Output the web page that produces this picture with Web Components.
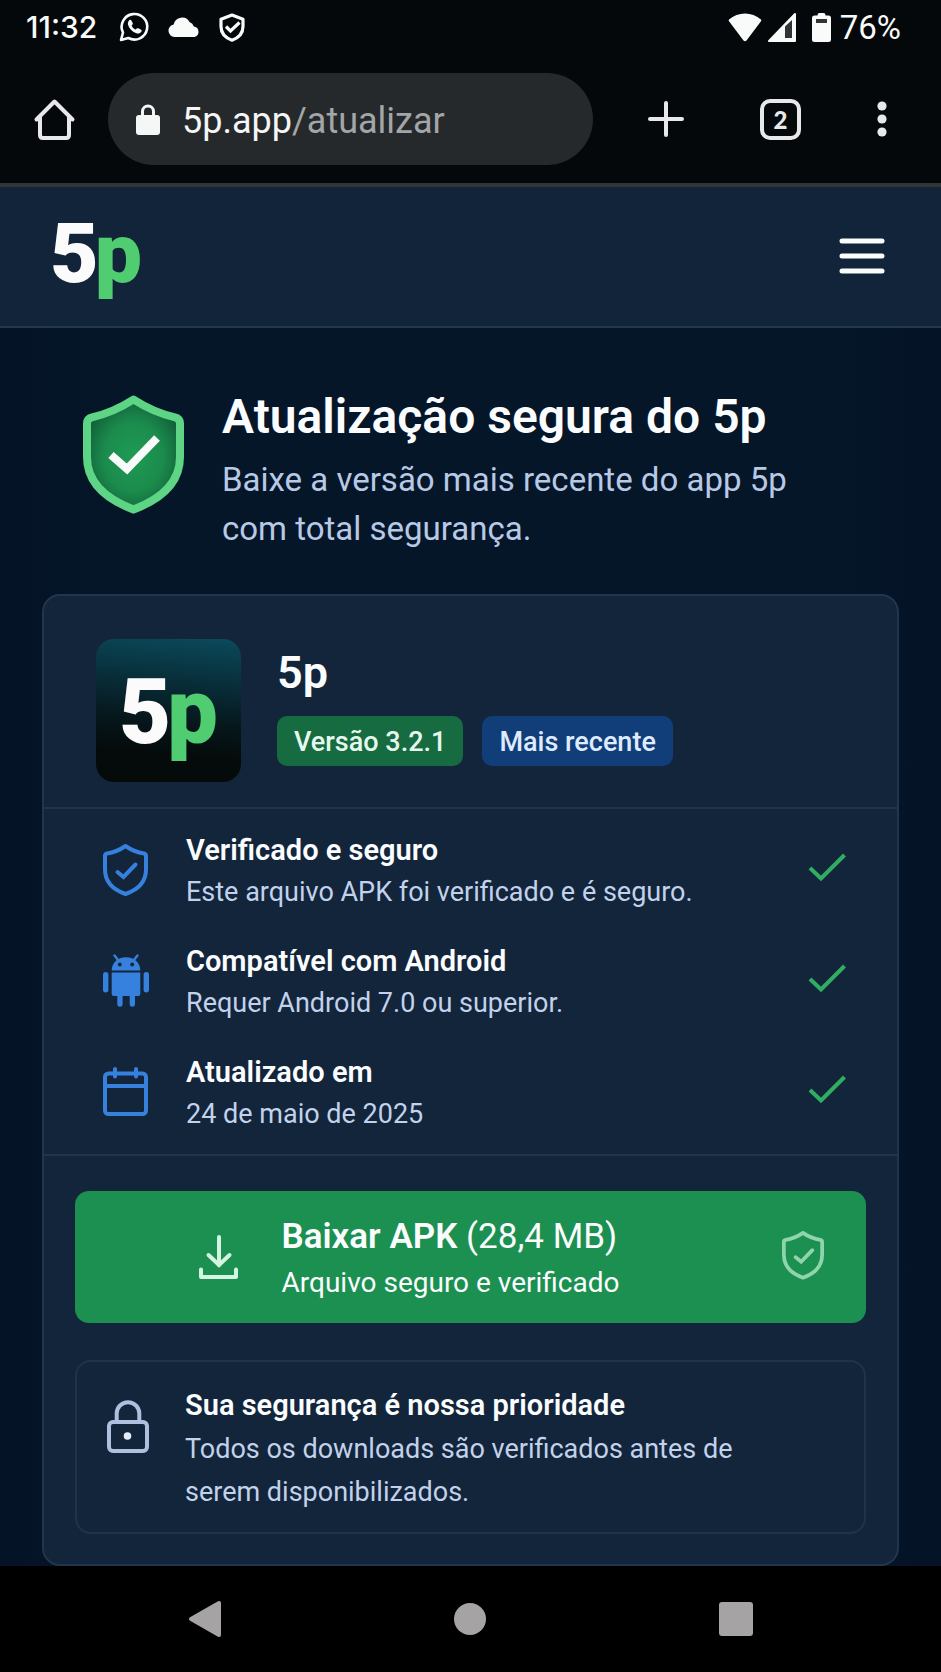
<!DOCTYPE html>
<html lang="pt-BR">
<head>
  <meta charset="UTF-8">
  <meta name="viewport" content="width=device-width, initial-scale=1">
  <title>Atualização segura do 5p</title>
  <style>
    * { box-sizing: border-box; }
    body {
      margin: 0;
      min-height: 100vh;
      display: flex;
      flex-direction: column;
      background: #051528;
      color: #fbfcfe;
      font-family: Roboto, "Liberation Sans", sans-serif;
    }
    main {
      flex: 1;
      background: linear-gradient(90deg, #041325 0%, #051629 12%, #051629 88%, #041325 100%);
    }
  </style>
</head>
<body>
  <status-bar hora="11:32" bateria="76%"></status-bar>
  <browser-bar dominio="5p.app" caminho="/atualizar" abas="2"></browser-bar>
  <site-header></site-header>

  <main>
    <page-hero>
      <span slot="titulo">Atualização segura do 5p</span>
      Baixe a versão mais recente do app 5p com total segurança.
    </page-hero>

    <app-card nome="5p">
      <app-badge slot="badges">Versão 3.2.1</app-badge>
      <app-badge slot="badges" tipo="azul">Mais recente</app-badge>

      <feature-item slot="itens" icone="escudo" titulo="Verificado e seguro">Este arquivo APK foi verificado e é seguro.</feature-item>
      <feature-item slot="itens" icone="android" titulo="Compatível com Android">Requer Android 7.0 ou superior.</feature-item>
      <feature-item slot="itens" icone="calendario" titulo="Atualizado em">24 de maio de 2025</feature-item>

      <download-button titulo="Baixar APK" tamanho="(28,4 MB)">Arquivo seguro e verificado</download-button>
      <security-note titulo="Sua segurança é nossa prioridade">Todos os downloads são verificados antes de serem disponibilizados.</security-note>
    </app-card>
  </main>

  <nav-bar></nav-bar>

  <script>
    // [largura, altura, conteúdo]
    const ICONES = {
      whatsapp: [30, 30, `
        <path d="M2 28l2-7.500A12.800 12.800 0 1 1 9.300 26z" fill="none" stroke="currentColor" stroke-width="2.600" stroke-linejoin="round"/>
        <path d="M10.200 8.200c.6-.6 1.600-.6 2 .1l1.500 2.600c.3.600.2 1.200-.2 1.700l-.9 1.100c.9 1.800 2.200 3.100 4 3.900l1.200-1.100c.4-.4 1.100-.5 1.600-.2l2.700 1.500c.7.4.8 1.300.2 2-1.200 1.600-3 2.200-4.900 1.500-4-1.300-7.100-4.300-8.300-8.200-.5-1.900-.1-3.700 1.100-4.900z" fill="currentColor"/>`],
      nuvem: [32, 20, `
        <path d="M6.500 20a6.300 6.300 0 0 1-.8-12.500A8.500 8.500 0 0 1 21.500 5a6.500 6.500 0 0 1 4.300 4.600A5.300 5.300 0 0 1 26.500 20z" fill="currentColor"/>`],
      protecao: [26, 29, `
        <path d="M13 2L2 6.200V13.500c0 6.500 4.300 11.300 11 13.700 6.700-2.400 11-7.200 11-13.700V6.200z" fill="none" stroke="currentColor" stroke-width="3.200" stroke-linejoin="round"/>
        <path d="M7 13.500l4.500 4.500 9-8.500" fill="none" stroke="currentColor" stroke-width="3.200"/>`],
      wifi: [34, 29, `<path d="M1 6.500C10-1.500 24-1.500 33 6.500q.8.800 0 1.700L18.500 27.500q-1.500 1.500-3 0L1 8.200q-.8-.9 0-1.700z" fill="currentColor"/>`],
      sinal: [28, 29, `
        <path d="M27 1v27H1z" fill="currentColor" stroke="currentColor" stroke-width="2" stroke-linejoin="round"/>
        <path d="M17 13.500L24 7v18h-7z" fill="#303437"/>`],
      bateria: [19, 29, `
        <path d="M5.500 2q0-2 2-2h4q2 0 2 2v.5h3q2.500 0 2.500 2.500v21.500q0 2.500-2.500 2.500h-14Q0 29 0 26.500V5q0-2.500 2.500-2.500h3z" fill="currentColor"/>
        <path d="M4 6h11v4H4z" fill="#303437"/>`],
      casa: [41, 41, `
        <path d="M2.500 20.500L20.500 2.500l18 18M6 17.500V36q0 3 3 3h23q3 0 3-3V17.500" fill="none" stroke="currentColor" stroke-width="4" stroke-linecap="round" stroke-linejoin="round"/>`],
      cadeado: [24, 31, `
        <path d="M6.500 13V7.500a5.500 5.500 0 0 1 11 0V13" fill="none" stroke="currentColor" stroke-width="3"/>
        <rect x="0" y="11" width="24" height="20" rx="3" fill="currentColor"/>`],
      mais: [36, 36, `<path d="M18 2v32M2 18h32" stroke="currentColor" stroke-width="4" stroke-linecap="round"/>`],
      pontos: [10, 36, `
        <circle cx="5" cy="5" r="4.600" fill="currentColor"/>
        <circle cx="5" cy="18" r="4.600" fill="currentColor"/>
        <circle cx="5" cy="31" r="4.600" fill="currentColor"/>`],
      menu: [46, 36, `<path d="M3 3h40M3 18h40M3 33h40" stroke="currentColor" stroke-width="5" stroke-linecap="round"/>`],
      escudoGrande: [101, 119, `
        <defs>
          <radialGradient id="verde" cx="50%" cy="52%" r="58%">
            <stop offset="0%" stop-color="#1f9b55"/>
            <stop offset="55%" stop-color="#1b8b4c"/>
            <stop offset="100%" stop-color="#105a37"/>
          </radialGradient>
        </defs>
        <path d="M50.500 4.500C38 12.500 24 19 9 22.300Q4 23.500 4 28.500V62C4 88 24 104.500 50.500 114.500 77 104.500 97 88 97 62V28.500Q97 23.500 92 22.300C77 19 63 12.500 50.500 4.500z" fill="url(#verde)" stroke="#5ed584" stroke-width="8" stroke-linejoin="round"/>
        <path d="M28 60l16 14 30-31" fill="none" stroke="#f8fbf9" stroke-width="8"/>`],
      escudo: [45, 52, `
        <path d="M22.500 2C17 5.800 10.500 8.500 4 9.500Q2 9.800 2 12V25.500C2 37.500 9.500 45.500 22.500 50 35.500 45.500 43 37.500 43 25.500V12Q43 9.800 41 9.500C34.500 8.500 28 5.800 22.500 2z" fill="none" stroke="currentColor" stroke-width="4" stroke-linejoin="round"/>
        <path d="M14.500 28l6 5 12-12.500" fill="none" stroke="currentColor" stroke-width="4" stroke-linecap="round"/>`],
      android: [46, 53, `
        <path d="M11.500 1.500l4 5M34.500 1.500l-4 5" stroke="currentColor" stroke-width="2.400" stroke-linecap="round"/>
        <path d="M8.700 16.500C8.700 9 14.500 3.200 23 3.200S37.300 9 37.300 16.500z" fill="currentColor"/>
        <circle cx="16.800" cy="10.500" r="1.900" fill="#13253b"/>
        <circle cx="29.200" cy="10.500" r="1.900" fill="#13253b"/>
        <path d="M8.700 18.500h28.600V40q0 2-2 2H32v8a2.600 2.600 0 0 1-5.300 0v-8h-7.100v8a2.600 2.600 0 0 1-5.300 0v-8h-3.600q-2 0-2-2z" fill="currentColor"/>
        <rect x="0" y="18" width="5.400" height="20.500" rx="2.700" fill="currentColor"/>
        <rect x="40.600" y="18" width="5.400" height="20.500" rx="2.700" fill="currentColor"/>`],
      calendario: [45, 49, `
        <rect x="2" y="6.500" width="41" height="40.500" rx="3.500" fill="none" stroke="currentColor" stroke-width="4"/>
        <path d="M3 19h39" stroke="currentColor" stroke-width="4"/>
        <path d="M12 2v7.500M33 2v7.500" stroke="currentColor" stroke-width="4" stroke-linecap="round"/>`],
      ok: [38, 29, `<path d="M2 15l11 10.500L36.500 2" fill="none" stroke="currentColor" stroke-width="4"/>`],
      baixar: [39, 43, `
        <path d="M20 1v28" stroke="currentColor" stroke-width="4" stroke-linecap="round"/>
        <path d="M9.500 19L20 29l10.500-10" fill="none" stroke="currentColor" stroke-width="4" stroke-linecap="round"/>
        <path d="M2 33.500V41h35v-7.500" fill="none" stroke="currentColor" stroke-width="4" stroke-linecap="round" stroke-linejoin="round"/>`],
      cadeadoLinha: [42, 53, `
        <path d="M9.700 21V13.500a11.300 11.300 0 0 1 22.600 0V21" fill="none" stroke="currentColor" stroke-width="4"/>
        <rect x="2" y="22" width="38" height="29" rx="4" fill="none" stroke="currentColor" stroke-width="4"/>
        <circle cx="20.500" cy="36" r="3.800" fill="#e4ecfa"/>`],
      voltar: [32, 36, `<path d="M30 2v32L2 18z" fill="currentColor" stroke="currentColor" stroke-width="4" stroke-linejoin="round"/>`],
      inicio: [32, 32, `<circle cx="16" cy="16" r="16" fill="currentColor"/>`],
      recentes: [34, 34, `<rect width="34" height="34" rx="3" fill="currentColor"/>`]
    };

    const BASE = `
      * { box-sizing: border-box; }
      button { margin: 0; padding: 0; border: none; background: none; color: inherit; font: inherit; cursor: pointer; }
    `;

    class UiIcon extends HTMLElement {
      connectedCallback() {
        if (!this.shadowRoot) this.attachShadow({ mode: 'open' });
        const [w, h, corpo] = ICONES[this.getAttribute('nome')];
        // "largura" reduz o ícone mantendo a proporção
        const largura = this.getAttribute('largura') || w;
        this.shadowRoot.innerHTML = `
          <style>
            :host { display: block; flex: none; }
            svg { display: block; overflow: visible; }
          </style>
          <svg width="${largura}" viewBox="0 0 ${w} ${h}" aria-hidden="true">${corpo}</svg>
        `;
      }
    }

    class StatusBar extends HTMLElement {
      connectedCallback() {
        this.attachShadow({ mode: 'open' }).innerHTML = `
          <style>
            ${BASE}
            :host {
              display: flex;
              justify-content: space-between;
              height: 56px;
              padding: 0 40px 2px 26px;
              background: #04080a;
              color: #f9fafa;
            }
            div { display: flex; align-items: center; gap: 19px; }
            .hora { font: 500 30px Inter, sans-serif; margin-right: 3px; }
            .direita { gap: 6px; }
            .direita [nome="bateria"] { margin-left: 10px; }
            .bateria { font-size: 33px; margin-left: 3px; }
          </style>
          <div>
            <span class="hora">${this.getAttribute('hora')}</span>
            <ui-icon nome="whatsapp"></ui-icon>
            <ui-icon nome="nuvem"></ui-icon>
            <ui-icon nome="protecao"></ui-icon>
          </div>
          <div class="direita">
            <ui-icon nome="wifi"></ui-icon>
            <ui-icon nome="sinal"></ui-icon>
            <ui-icon nome="bateria"></ui-icon>
            <span class="bateria">${this.getAttribute('bateria')}</span>
          </div>
        `;
      }
    }

    class BrowserBar extends HTMLElement {
      connectedCallback() {
        this.attachShadow({ mode: 'open' }).innerHTML = `
          <style>
            ${BASE}
            :host {
              display: flex;
              align-items: center;
              padding: 17px 54px 18px 34px;
              background: #04080a;
              border-bottom: 4px solid #323435;
              color: #e8e8ea;
            }
            .endereco {
              flex: 1;
              display: flex;
              align-items: center;
              gap: 22px;
              height: 92px;
              margin-left: 33px;
              padding: 0 28px;
              border-radius: 46px;
              background: #25292b;
              color: #f5f6f6;
              font-size: 36px;
              text-align: left;
            }
            .url { padding-top: 4px; }
            .caminho { color: #a3a6a8; }
            .acoes { display: flex; align-items: center; gap: 76px; margin-left: 55px; }
            .abas {
              width: 41px;
              height: 41px;
              border: 4px solid #e8e8ea;
              border-radius: 10px;
              font: 900 24px/33px Lato, sans-serif;
            }
          </style>
          <button type="button" aria-label="Página inicial"><ui-icon nome="casa"></ui-icon></button>
          <button type="button" class="endereco">
            <ui-icon nome="cadeado"></ui-icon>
            <span class="url">${this.getAttribute('dominio')}<span class="caminho">${this.getAttribute('caminho')}</span></span>
          </button>
          <div class="acoes">
            <button type="button" aria-label="Nova aba"><ui-icon nome="mais"></ui-icon></button>
            <button type="button" class="abas">${this.getAttribute('abas')}</button>
            <button type="button" aria-label="Mais opções"><ui-icon nome="pontos"></ui-icon></button>
          </div>
        `;
      }
    }

    class AppLogo extends HTMLElement {
      connectedCallback() {
        this.attachShadow({ mode: 'open' }).innerHTML = `
          <style>
            :host {
              display: block;
              font: 900 var(--logo-tamanho, 84px)/1 Roboto, sans-serif;
              color: #fbfbfc;
            }
            .p { color: #50cd70; margin-left: -4px; }
          </style>
          <span>5</span><span class="p">p</span>
        `;
      }
    }

    class SiteHeader extends HTMLElement {
      connectedCallback() {
        this.attachShadow({ mode: 'open' }).innerHTML = `
          <style>
            ${BASE}
            :host {
              display: flex;
              align-items: center;
              justify-content: space-between;
              height: 141px;
              padding: 0 56px 2px 50px;
              background: #122439;
              border-bottom: 2px solid #213852;
            }
            a { padding-bottom: 4px; text-decoration: none; }
          </style>
          <a href="#"><app-logo></app-logo></a>
          <button type="button" aria-label="Menu"><ui-icon nome="menu"></ui-icon></button>
        `;
      }
    }

    class PageHero extends HTMLElement {
      connectedCallback() {
        this.attachShadow({ mode: 'open' }).innerHTML = `
          <style>
            ${BASE}
            :host { display: flex; gap: 38px; padding: 61px 83px 41px; }
            ui-icon { margin-top: 6px; }
            h1 { margin: 0 0 10px; font-size: 48px; line-height: 56px; font-weight: 600; }
            p { margin: 0; font-size: 33px; line-height: 49px; color: #b8c9e6; }
          </style>
          <ui-icon nome="escudoGrande"></ui-icon>
          <div>
            <h1><slot name="titulo"></slot></h1>
            <p><slot></slot></p>
          </div>
        `;
      }
    }

    class AppBadge extends HTMLElement {
      connectedCallback() {
        this.attachShadow({ mode: 'open' }).innerHTML = `
          <style>
            :host {
              display: block;
              padding: 2px 17px 0;
              border-radius: 10px;
              background: #166b40;
              color: #e6f8ee;
              font-size: 27px;
              line-height: 48px;
              font-weight: 500;
            }
            :host([tipo="azul"]) { background: #113e79; color: #dfebff; }
          </style>
          <slot></slot>
        `;
      }
    }

    class FeatureItem extends HTMLElement {
      connectedCallback() {
        this.attachShadow({ mode: 'open' }).innerHTML = `
          <style>
            ${BASE}
            :host { display: flex; align-items: center; }
            .icone { width: 46px; padding-bottom: 3px; color: #3681dd; }
            .texto { flex: 1; margin-left: 37px; line-height: 42px; }
            h3 { margin: 0; font-size: 29px; font-weight: 600; }
            p { margin: 0; font-size: 27px; color: #c2d2ec; }
            .ok { color: #2fae61; padding-bottom: 8px; }
          </style>
          <ui-icon class="icone" nome="${this.getAttribute('icone')}"></ui-icon>
          <div class="texto">
            <h3>${this.getAttribute('titulo')}</h3>
            <p><slot></slot></p>
          </div>
          <ui-icon class="ok" nome="ok"></ui-icon>
        `;
      }
    }

    class DownloadButton extends HTMLElement {
      connectedCallback() {
        this.attachShadow({ mode: 'open' }).innerHTML = `
          <style>
            ${BASE}
            :host { display: block; }
            button {
              display: grid;
              grid-template-columns: 1fr auto 1fr;
              align-items: center;
              width: 100%;
              height: 132px;
              padding: 0 42px 0 2px;
              border-radius: 14px;
              background: #1c9050;
              text-align: left;
            }
            .baixar { justify-self: end; margin-right: 44px; color: #d3f5e2; }
            .escudo { justify-self: end; padding-bottom: 3px; color: #8fd4ac; }
            .texto { display: grid; gap: 4px; padding-top: 5px; }
            .titulo { font-size: 35px; line-height: 42px; }
            b { font-weight: 600; }
            .sub { font-size: 28px; line-height: 42px; }
          </style>
          <button type="button">
            <ui-icon class="baixar" nome="baixar"></ui-icon>
            <span class="texto">
              <span class="titulo"><b>${this.getAttribute('titulo')}</b> ${this.getAttribute('tamanho')}</span>
              <span class="sub"><slot></slot></span>
            </span>
            <ui-icon class="escudo" nome="escudo" largura="42"></ui-icon>
          </button>
        `;
      }
    }

    class SecurityNote extends HTMLElement {
      connectedCallback() {
        this.attachShadow({ mode: 'open' }).innerHTML = `
          <style>
            ${BASE}
            :host {
              display: flex;
              gap: 36px;
              padding: 22px 30px 18px;
              border: 2px solid #20334b;
              border-radius: 16px;
            }
            ui-icon { margin-top: 16px; color: #adc0e0; }
            h3 { margin: 0 0 2px; font-size: 29px; line-height: 42px; font-weight: 600; }
            p { margin: 0; max-width: 600px; font-size: 27px; line-height: 43px; color: #c2d2ec; }
          </style>
          <ui-icon nome="cadeadoLinha"></ui-icon>
          <div>
            <h3>${this.getAttribute('titulo')}</h3>
            <p><slot></slot></p>
          </div>
        `;
      }
    }

    class AppCard extends HTMLElement {
      connectedCallback() {
        this.attachShadow({ mode: 'open' }).innerHTML = `
          <style>
            ${BASE}
            :host {
              display: block;
              margin: 0 42px;
              border: 2px solid #22354e;
              border-radius: 18px;
              background: #13253b;
            }
            header { display: flex; gap: 36px; padding: 43px 52px 25px; }
            .icone {
              --logo-tamanho: 90px;
              flex: none;
              display: grid;
              place-content: center;
              width: 145px;
              height: 143px;
              padding-top: 4px;
              border-radius: 18px;
              background: linear-gradient(185deg, #0b4a5b 0%, #08303c 28%, #06161b 58%, #050b0b 78%, #050a09 100%);
            }
            h2 { margin: 8px 0 17px; font-size: 45px; line-height: 52px; font-weight: 600; }
            .badges { display: flex; flex-wrap: wrap; gap: 19px; }
            .itens {
              display: grid;
              gap: 27px;
              padding: 20px 51px 19px 59px;
              border: solid #20344c;
              border-width: 2px 0;
            }
            .acoes { display: grid; gap: 37px; padding: 35px 31px 30px; }
          </style>
          <header>
            <div class="icone"><app-logo></app-logo></div>
            <div>
              <h2>${this.getAttribute('nome')}</h2>
              <div class="badges"><slot name="badges"></slot></div>
            </div>
          </header>
          <div class="itens"><slot name="itens"></slot></div>
          <div class="acoes"><slot></slot></div>
        `;
      }
    }

    class NavBar extends HTMLElement {
      connectedCallback() {
        this.attachShadow({ mode: 'open' }).innerHTML = `
          <style>
            ${BASE}
            :host {
              display: grid;
              grid-template-columns: repeat(3, 1fr);
              height: 106px;
              padding: 0 72px;
              background: #000;
              color: #a5a3a3;
            }
            button { display: grid; place-content: center; }
          </style>
          <button type="button" aria-label="Voltar"><ui-icon nome="voltar"></ui-icon></button>
          <button type="button" aria-label="Início"><ui-icon nome="inicio"></ui-icon></button>
          <button type="button" aria-label="Recentes"><ui-icon nome="recentes"></ui-icon></button>
        `;
      }
    }

    customElements.define('ui-icon', UiIcon);
    customElements.define('app-logo', AppLogo);
    customElements.define('status-bar', StatusBar);
    customElements.define('browser-bar', BrowserBar);
    customElements.define('site-header', SiteHeader);
    customElements.define('page-hero', PageHero);
    customElements.define('app-badge', AppBadge);
    customElements.define('feature-item', FeatureItem);
    customElements.define('download-button', DownloadButton);
    customElements.define('security-note', SecurityNote);
    customElements.define('app-card', AppCard);
    customElements.define('nav-bar', NavBar);
  </script>
</body>
</html>
